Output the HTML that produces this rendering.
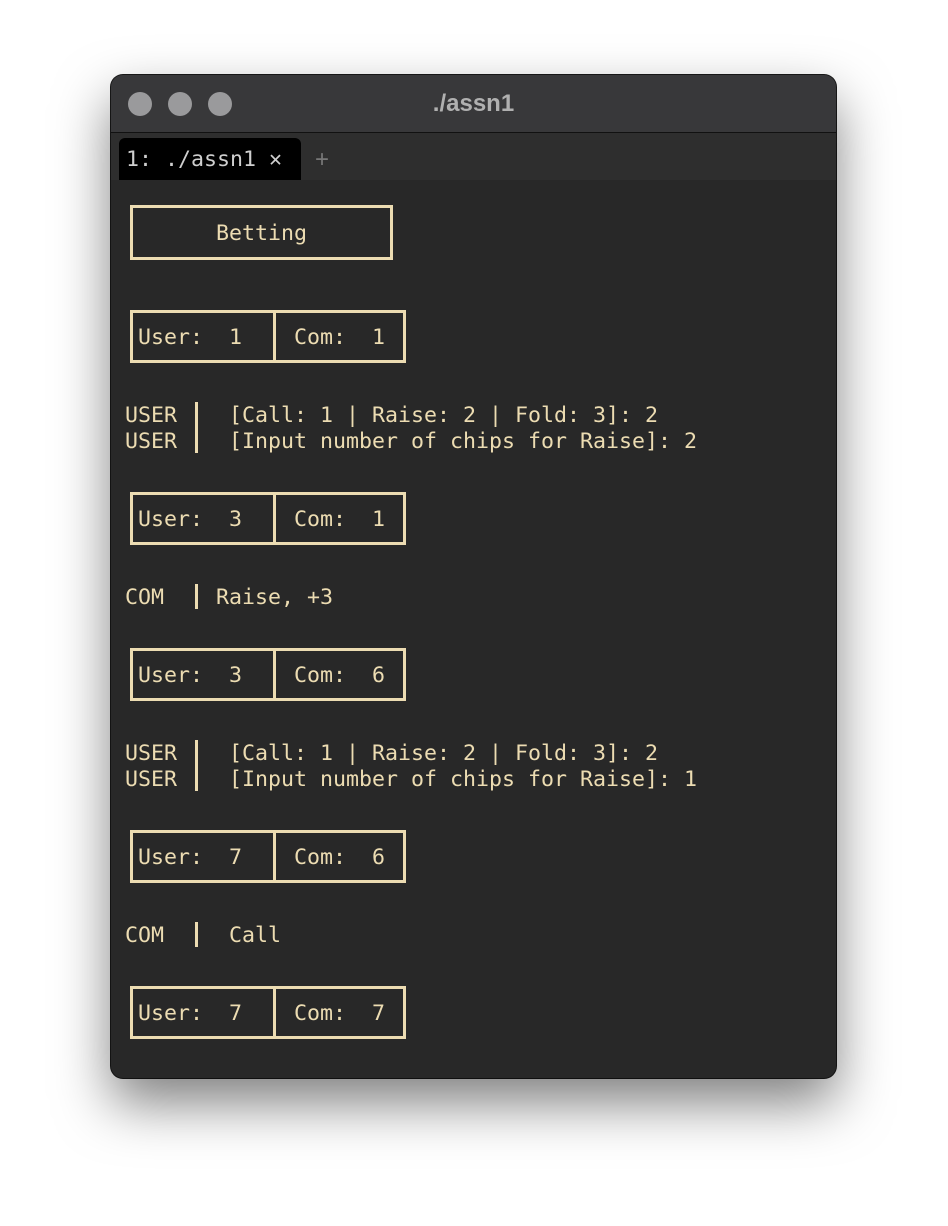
<!DOCTYPE html>
<html><head><style>
body{margin:0;width:948px;height:1226px;background:#fff;position:relative;overflow:hidden;font-family:"DejaVu Sans Mono","Liberation Mono",monospace;}
.win{position:absolute;left:111px;top:75px;width:725px;height:1003px;border-radius:12px;background:#282828;overflow:hidden;box-shadow:0 25px 55px rgba(0,0,0,0.5),0 0 0 1px #1a1a1a;}
.title{position:absolute;left:0;top:0;width:100%;height:57px;background:#38383a;border-bottom:1px solid #111;}
.dot{position:absolute;top:17px;width:24px;height:24px;border-radius:50%;background:#9a9a9c;}
.ttl{position:absolute;left:0;width:100%;top:15px;text-align:center;font:bold 24px "Liberation Sans",sans-serif;color:#b0b0b0;}
.tabs{position:absolute;left:0;top:58px;width:100%;height:47px;background:#2e2e2e;}
.tab{position:absolute;left:8px;top:5px;width:182px;height:42px;background:#000;border-radius:6px 6px 0 0;color:#cfcfcf;font-size:21.6px;line-height:44px;padding-left:7px;box-sizing:border-box;}
.plus{position:absolute;left:204px;top:5px;line-height:44px;color:#777;font-size:24px;font-family:"Liberation Sans",sans-serif;}
.t{position:absolute;color:#ecdcb2;font-size:21.6px;line-height:26px;white-space:pre;margin-top:2px;}
.box{position:absolute;border:3px solid #ecdcb2;box-sizing:border-box;}
.bar{position:absolute;background:#ecdcb2;width:3px;}
</style></head><body>
<div class="win">
<div class="title"><div class="dot" style="left:17px"></div><div class="dot" style="left:57px"></div><div class="dot" style="left:97px"></div><div class="ttl">./assn1</div></div>
<div class="tabs"><div class="tab">1: ./assn1 ✕</div><div class="plus">+</div></div>
</div>
<div class="box" style="left:130px;top:205px;width:263px;height:55px"></div>
<div class="t" style="left:216px;top:219px">Betting</div>

<div class="box" style="left:130px;top:310px;width:276px;height:53px"></div><div class="bar" style="left:273px;top:310px;height:53px"></div>
<div class="t" style="left:138px;top:323px">User:  1</div><div class="t" style="left:294px;top:323px">Com:  1</div>

<div class="t" style="left:125px;top:401px">USER</div><div class="t" style="left:125px;top:427px">USER</div>
<div class="bar" style="left:195px;top:402px;height:51px"></div>
<div class="t" style="left:229px;top:401px">[Call: 1 | Raise: 2 | Fold: 3]: 2</div>
<div class="t" style="left:229px;top:427px">[Input number of chips for Raise]: 2</div>

<div class="box" style="left:130px;top:492px;width:276px;height:53px"></div><div class="bar" style="left:273px;top:492px;height:53px"></div>
<div class="t" style="left:138px;top:505px">User:  3</div><div class="t" style="left:294px;top:505px">Com:  1</div>

<div class="t" style="left:125px;top:583px">COM</div><div class="bar" style="left:195px;top:584px;height:25px"></div>
<div class="t" style="left:216px;top:583px">Raise, +3</div>

<div class="box" style="left:130px;top:648px;width:276px;height:53px"></div><div class="bar" style="left:273px;top:648px;height:53px"></div>
<div class="t" style="left:138px;top:661px">User:  3</div><div class="t" style="left:294px;top:661px">Com:  6</div>

<div class="t" style="left:125px;top:739px">USER</div><div class="t" style="left:125px;top:765px">USER</div>
<div class="bar" style="left:195px;top:740px;height:51px"></div>
<div class="t" style="left:229px;top:739px">[Call: 1 | Raise: 2 | Fold: 3]: 2</div>
<div class="t" style="left:229px;top:765px">[Input number of chips for Raise]: 1</div>

<div class="box" style="left:130px;top:830px;width:276px;height:53px"></div><div class="bar" style="left:273px;top:830px;height:53px"></div>
<div class="t" style="left:138px;top:843px">User:  7</div><div class="t" style="left:294px;top:843px">Com:  6</div>

<div class="t" style="left:125px;top:921px">COM</div><div class="bar" style="left:195px;top:922px;height:25px"></div>
<div class="t" style="left:229px;top:921px">Call</div>

<div class="box" style="left:130px;top:986px;width:276px;height:53px"></div><div class="bar" style="left:273px;top:986px;height:53px"></div>
<div class="t" style="left:138px;top:999px">User:  7</div><div class="t" style="left:294px;top:999px">Com:  7</div>
</body></html>
